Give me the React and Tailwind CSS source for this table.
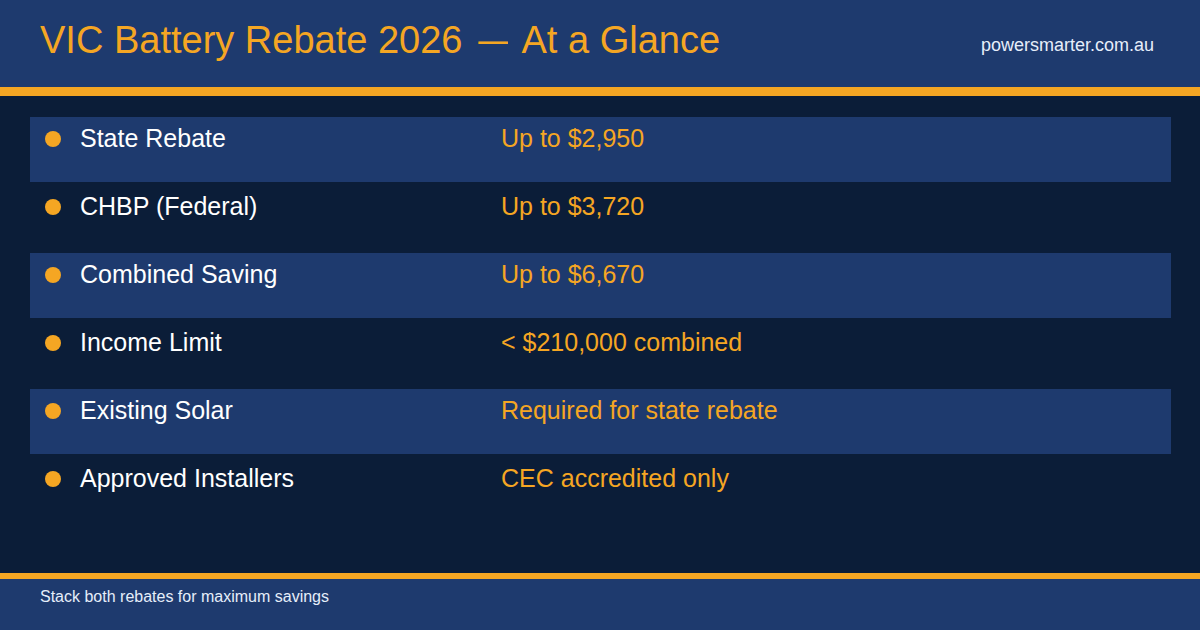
import React from 'react';

const rows = [
    { label: 'State Rebate', value: 'Up to $2,950' },
    { label: 'CHBP (Federal)', value: 'Up to $3,720' },
    { label: 'Combined Saving', value: 'Up to $6,670' },
    { label: 'Income Limit', value: '< $210,000 combined' },
    { label: 'Existing Solar', value: 'Required for state rebate' },
    { label: 'Approved Installers', value: 'CEC accredited only' },
];

const App = () => {
    return (
        <div className="w-[1200px] h-[630px] flex flex-col bg-[#0b1d38] font-['Liberation_Sans',Arial,sans-serif] overflow-hidden">
            {/* Header */}
            <div className="h-[87px] shrink-0 bg-[#1e3a6e] flex items-center justify-between pl-[40px] pr-[46px]">
                <h1 className="text-[38px] leading-none text-[#f5a623] pb-[8px] whitespace-pre">
                    VIC Battery Rebate 2026 <span className="inline-block scale-x-[0.78] mx-[1px]">—</span> At a Glance
                </h1>
                <span className="text-[18px] leading-none text-[#e6eefa] pt-[2px]">powersmarter.com.au</span>
            </div>
            <div className="h-[9px] shrink-0 bg-[#f5a623]" />

            {/* Rows */}
            <div className="flex-1 pt-[21px] pl-[30px] pr-[29px]">
                {rows.map((row, i) => (
                    <div key={row.label} className="h-[68px]">
                        <div className={`h-[65px] flex items-start pt-[7px] ${i % 2 === 0 ? 'bg-[#1e3a6e]' : ''}`}>
                            <div className="w-[16px] h-[16px] rounded-full bg-[#f5a623] ml-[15px] mt-[7px] shrink-0" />
                            <span className="w-[440px] pl-[19px] text-[25px] leading-[28px] text-white">{row.label}</span>
                            <span className="text-[25px] leading-[28px] text-[#f5a623]">{row.value}</span>
                        </div>
                    </div>
                ))}
            </div>

            {/* Footer */}
            <div className="h-[6px] shrink-0 bg-[#f5a623]" />
            <div className="h-[51px] shrink-0 bg-[#1e3a6e] px-[40px] pt-[6px]">
                <span className="text-[16px] leading-[18px] text-[#e6eefa]">Stack both rebates for maximum savings</span>
            </div>
        </div>
    );
};

export default App;
